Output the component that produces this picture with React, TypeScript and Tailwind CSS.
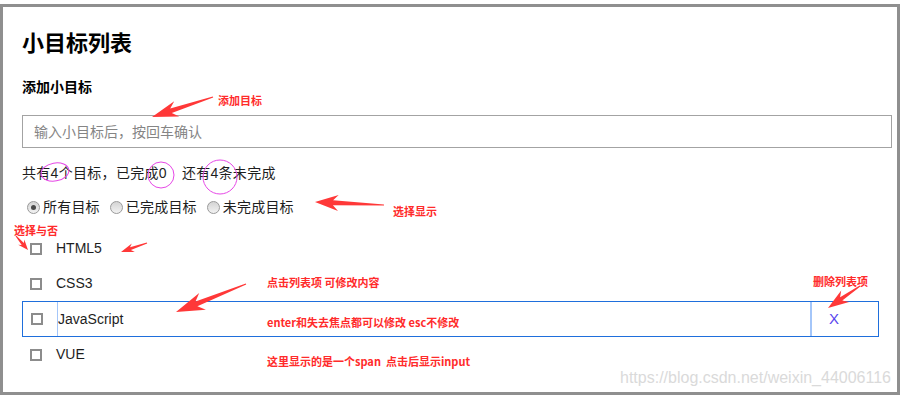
import React from "react";

function arrowPoints(x1: number, y1: number, x2: number, y2: number, hl: number, hw: number, sw: number, tw: number) {
  const dx = x2 - x1, dy = y2 - y1;
  const L = Math.hypot(dx, dy);
  const ux = dx / L, uy = dy / L;
  const nx = -uy, ny = ux;
  const bx = x2 - ux * hl, by = y2 - uy * hl;
  const rx = bx - ux * hl * 0.3, ry = by - uy * hl * 0.3;
  const pts = [
    [x1 + (nx * tw) / 2, y1 + (ny * tw) / 2],
    [bx + (nx * sw) / 2, by + (ny * sw) / 2],
    [rx + (nx * hw) / 2, ry + (ny * hw) / 2],
    [x2, y2],
    [rx - (nx * hw) / 2, ry - (ny * hw) / 2],
    [bx - (nx * sw) / 2, by - (ny * sw) / 2],
    [x1 - (nx * tw) / 2, y1 - (ny * tw) / 2],
  ];
  return pts.map((p) => p[0].toFixed(1) + "," + p[1].toFixed(1)).join(" ");
}

const arrows: [number, number, number, number, number, number, number, number][] = [
  [213, 97, 152, 117, 20, 16, 5, 1],
  [384, 205, 315, 202, 18, 16, 5, 1],
  [16, 236, 28, 250, 8, 8, 3, 1],
  [147, 243, 121, 252, 10, 9, 3, 1],
  [246, 284, 176, 312, 22, 18, 5, 1],
  [860, 286, 828, 308, 16, 14, 4, 1],
];

function Checkbox() {
  return <span className="block w-[12px] h-[12px] border-2 border-[#8c8c8c] bg-white" />;
}

function Radio({ checked }: { checked?: boolean }) {
  return (
    <span className="flex items-center justify-center w-[13px] h-[13px] rounded-full border border-[#9a9a9a] bg-gradient-to-b from-[#d4d4d4] to-[#f2f2f2]">
      {checked && <span className="block w-[5px] h-[5px] rounded-full bg-[#4a4a4a]" />}
    </span>
  );
}

const note = "absolute text-[11px] font-bold text-[#ff2b2b] leading-[14px] whitespace-pre";

export default function App() {
  return (
    <div
      className="relative w-[901px] h-[397px] bg-white overflow-hidden text-[#1e1e1e]"
      style={{ fontFamily: '"Liberation Sans", "Noto Sans CJK SC", sans-serif' }}
    >
      <div className="mt-[4px] w-[900px] h-[391px] border-[3px] border-[#8f8f8f] pl-[19px] pt-[22px]">
        <h1 className="h-[30px] leading-[30px] text-[22px] font-bold text-black">小目标列表</h1>
        <h2 className="mt-[18px] h-[20px] leading-[20px] text-[14px] font-bold text-black">添加小目标</h2>
        <input
          className="mt-[18px] block w-[870px] h-[33px] border border-[#a3a3a3] px-[11px] text-[14px] outline-none placeholder:text-[#858585]"
          placeholder="输入小目标后，按回车确认"
        />
        <div className="mt-[15px] h-[20px] leading-[20px] text-[14px] tracking-[0.3px] flex">
          <span>共有4个目标，已完成0</span>
          <span className="ml-[15px]">还有4条未完成</span>
        </div>
        <div className="mt-[14px] h-[20px] flex items-center text-[14px] tracking-[0.2px]">
          <span className="ml-[5px]"><Radio checked /></span>
          <span className="ml-[3px]">所有目标</span>
          <span className="ml-[10px]"><Radio /></span>
          <span className="ml-[3px]">已完成目标</span>
          <span className="ml-[10px]"><Radio /></span>
          <span className="ml-[3px]">未完成目标</span>
        </div>
        <div className="mt-[14px] text-[14px]">
          <div className="h-[35px] flex items-center">
            <span className="ml-[8px]"><Checkbox /></span>
            <span className="ml-[14px]">HTML5</span>
          </div>
          <div className="h-[35px] flex items-center">
            <span className="ml-[8px]"><Checkbox /></span>
            <span className="ml-[14px]">CSS3</span>
          </div>
          <div className="h-[36px] w-[857px] border border-[#1f6fdc] flex">
            <div className="w-[34px] flex items-center pl-[8px]">
              <Checkbox />
            </div>
            <input
              className="w-[755px] h-full border-l border-r-2 border-[#a4c6f9] pl-0 text-[14px] outline-none text-[#1e1e1e]"
              defaultValue="JavaScript"
            />
            <div className="flex-1 flex items-center pl-[17px] text-[15px] text-[#5a46ee]">X</div>
          </div>
          <div className="h-[35px] flex items-center">
            <span className="ml-[8px]"><Checkbox /></span>
            <span className="ml-[14px]">VUE</span>
          </div>
        </div>
      </div>

      <svg className="absolute left-0 top-0 pointer-events-none" width={901} height={397}>
        {arrows.map((a, i) => (
          <polygon key={i} points={arrowPoints(...a)} fill="#ff3838" />
        ))}
        <ellipse cx={55} cy={172} rx={14} ry={9} fill="none" stroke="#e648e6" strokeWidth={1} transform="rotate(-10 55 172)" />
        <ellipse cx={161} cy={175} rx={13} ry={13} fill="none" stroke="#e648e6" strokeWidth={1} />
        <ellipse cx={220} cy={177} rx={17} ry={17} fill="none" stroke="#e648e6" strokeWidth={1} />
      </svg>

      <div style={{ fontFamily: '"Noto Sans CJK SC", "Liberation Sans", sans-serif' }}>
        <span className={note + " left-[218px] top-[93px]"}>添加目标</span>
        <span className={note + " left-[393px] top-[204px]"}>选择显示</span>
        <span className={note + " left-[14px] top-[223px]"}>选择与否</span>
        <span className={note + " left-[267px] top-[275px]"}>点击列表项 可修改内容</span>
        <span className={note + " left-[267px] top-[315px]"}>enter和失去焦点都可以修改 esc不修改</span>
        <span className={note + " left-[267px] top-[354px]"}>这里显示的是一个span  点击后显示input</span>
        <span className={note + " left-[813px] top-[274px]"}>删除列表项</span>
      </div>

      <span
        className="absolute left-[620px] top-[369px] text-[16px] leading-[18px] text-[#dadada]"
        style={{ fontFamily: '"Liberation Sans", sans-serif' }}
      >
        https://blog.csdn.net/weixin_44006116
      </span>
    </div>
  );
}
